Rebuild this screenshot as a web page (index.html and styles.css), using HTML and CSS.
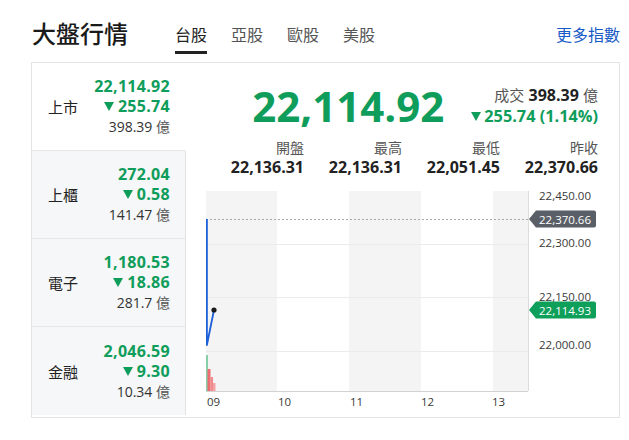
FILE: index.html
```html
<!DOCTYPE html>
<html lang="zh-Hant">
<head>
<meta charset="utf-8">
<title>大盤行情</title>
<link rel="stylesheet" href="styles.css">
</head>
<body>
<div class="page">
  <header class="header">
    <h1 class="title">大盤行情</h1>
    <nav class="tabs">
      <a class="tab active">台股</a>
      <a class="tab">亞股</a>
      <a class="tab">歐股</a>
      <a class="tab">美股</a>
    </nav>
    <a class="more">更多指數</a>
  </header>

  <section class="card">
    <aside class="side">
      <div class="row selected">
        <span class="name">上市</span>
        <div class="nums">
          <div class="price">22,114.92</div>
          <div class="chg"><i class="down"></i>255.74</div>
          <div class="vol">398.39 <span class="unit">億</span></div>
        </div>
      </div>
      <div class="row">
        <span class="name">上櫃</span>
        <div class="nums">
          <div class="price">272.04</div>
          <div class="chg"><i class="down"></i>0.58</div>
          <div class="vol">141.47 <span class="unit">億</span></div>
        </div>
      </div>
      <div class="row">
        <span class="name">電子</span>
        <div class="nums">
          <div class="price">1,180.53</div>
          <div class="chg"><i class="down"></i>18.86</div>
          <div class="vol">281.7 <span class="unit">億</span></div>
        </div>
      </div>
      <div class="row last">
        <span class="name">金融</span>
        <div class="nums">
          <div class="price">2,046.59</div>
          <div class="chg"><i class="down"></i>9.30</div>
          <div class="vol">10.34 <span class="unit">億</span></div>
        </div>
      </div>
    </aside>

    <div class="main">
      <div class="quote">
        <div class="big">22,114.92</div>
        <div class="quote-side">
          <div class="turnover"><span class="lbl">成交</span> <b>398.39</b> <span class="lbl">億</span></div>
          <div class="qchg"><i class="down"></i>255.74 (1.14%)</div>
        </div>
      </div>

      <div class="stats">
        <div class="stat"><div class="slbl">開盤</div><div class="sval">22,136.31</div></div>
        <div class="stat"><div class="slbl">最高</div><div class="sval">22,136.31</div></div>
        <div class="stat"><div class="slbl">最低</div><div class="sval">22,051.45</div></div>
        <div class="stat"><div class="slbl">昨收</div><div class="sval">22,370.66</div></div>
      </div>

      <svg class="chart" width="392" height="236" viewBox="0 0 392 236">
        <rect x="0" y="12" width="71" height="200" fill="#f4f4f4"/>
        <rect x="143" y="12" width="72" height="200" fill="#f4f4f4"/>
        <rect x="287" y="12" width="35" height="200" fill="#f4f4f4"/>
        <line x1="0" y1="65.5" x2="322" y2="65.5" stroke="#ebebeb"/>
        <line x1="0" y1="118.5" x2="322" y2="118.5" stroke="#ebebeb"/>
        <line x1="0" y1="172.5" x2="322" y2="172.5" stroke="#ebebeb"/>
        <line x1="0" y1="212.5" x2="322" y2="212.5" stroke="#d2d2d2"/>
        <line x1="322.5" y1="12" x2="322.5" y2="212" stroke="#dcdcdc"/>
        <line x1="0" y1="40.5" x2="324" y2="40.5" stroke="#a8a8a8" stroke-dasharray="2 2"/>
        <line x1="1" y1="176" x2="1" y2="212" stroke="#3db575" stroke-width="1.2"/>
        <rect x="1.5" y="190" width="3" height="22" fill="#ee6d70"/>
        <rect x="4.5" y="198" width="2.5" height="14" fill="#f08a8c"/>
        <rect x="7" y="204" width="2.5" height="8" fill="#f3a3a5"/>
        <path d="M0.9 40 L0.9 166 L8 131" fill="none" stroke="#1d5fd8" stroke-width="1.8" stroke-linejoin="round"/>
        <circle cx="8" cy="131" r="2.6" fill="#1b1b1b"/>
        <text class="ylbl" x="333" y="21">22,450.00</text>
        <text class="ylbl" x="333" y="68">22,300.00</text>
        <text class="ylbl" x="333" y="122">22,150.00</text>
        <text class="ylbl" x="333" y="170">22,000.00</text>
        <path d="M323 40 L330 31.5 L388 31.5 Q390 31.5 390 33.5 L390 46.5 Q390 48.5 388 48.5 L330 48.5 Z" fill="#5a5f67"/>
        <text class="tag" x="333" y="44.5">22,370.66</text>
        <path d="M323 131 L330 122.5 L388 122.5 Q390 122.5 390 124.5 L390 137.5 Q390 139.5 388 139.5 L330 139.5 Z" fill="#0e9f5b"/>
        <text class="tag" x="333" y="135.5">22,114.93</text>
        <text class="xlbl" x="1" y="227">09</text>
        <text class="xlbl" x="72" y="227">10</text>
        <text class="xlbl" x="144" y="227">11</text>
        <text class="xlbl" x="215" y="227">12</text>
        <text class="xlbl" x="286" y="227">13</text>
      </svg>
    </div>
  </section>
</div>
</body>
</html>
```

FILE: styles.css
```css
* { box-sizing: border-box; }
html, body { margin: 0; padding: 0; background: #fff; }
body {
  font-family: "Open Sans", "Noto Sans CJK TC", sans-serif;
  color: #222;
  width: 629px;
  height: 440px;
  overflow: hidden;
}
.page { width: 629px; }

.header {
  display: flex;
  align-items: flex-start;
  height: 62px;
  padding: 18px 9px 0 32px;
}
.title {
  margin: 0;
  font-family: "Noto Sans CJK TC", sans-serif;
  font-size: 24px;
  font-weight: 500;
  line-height: 30px;
  color: #1a1a1a;
}
.tabs {
  display: flex;
  gap: 24px;
  margin-left: 47px;
}
.tab, .more {
  font-family: "Noto Sans CJK TC", sans-serif;
  font-size: 16px;
  line-height: 22px;
  padding: 5px 0 6px;
  border-bottom: 3px solid transparent;
  color: #555;
  cursor: pointer;
}
.tab.active {
  color: #222;
  border-bottom-color: #222;
}
.more {
  margin-left: auto;
  color: #1a5cc6;
}

.card {
  margin-left: 31px;
  width: 589px;
  height: 356px;
  border: 1px solid #e3e3e3;
  display: flex;
}

.side {
  width: 154px;
  display: flex;
  flex-direction: column;
}
.row {
  height: 88px;
  display: flex;
  align-items: center;
  justify-content: space-between;
  padding: 0 15px 0 16px;
  background: #f6f7f8;
  border-right: 1px solid #e3e3e3;
  border-bottom: 1px solid #e6e6e6;
}
.row.selected {
  background: #fff;
  border-right-color: transparent;
}
.row.last { border-bottom: none; }
.name {
  font-family: "Noto Sans CJK TC", sans-serif;
  font-size: 15px;
  color: #222;
}
.nums { text-align: right; }
.price, .chg {
  font-size: 16px;
  font-weight: 700;
  line-height: 20px;
  letter-spacing: 0.3px;
  color: #0f9d5b;
}
.vol {
  font-size: 14px;
  line-height: 20px;
  color: #333;
}
.unit {
  font-family: "Noto Sans CJK TC", sans-serif;
  color: #555;
}
.down {
  display: inline-block;
  width: 0;
  height: 0;
  border-left: 5px solid transparent;
  border-right: 5px solid transparent;
  border-top: 9px solid #0f9d5b;
  margin-right: 4px;
  vertical-align: 1px;
}

.main {
  flex: 1;
  padding: 22px 21px 0 20px;
  display: flex;
  flex-direction: column;
}
.quote {
  display: flex;
  justify-content: flex-end;
  align-items: center;
  gap: 27px;
  height: 42px;
}
.big {
  font-size: 42px;
  font-weight: 700;
  line-height: 42px;
  color: #0f9d5b;
}
.quote-side { text-align: right; }
.turnover {
  font-size: 16px;
  line-height: 20px;
  height: 20px;
  color: #222;
}
.turnover b { font-weight: 700; }
.lbl {
  font-family: "Noto Sans CJK TC", sans-serif;
  font-size: 15px;
  line-height: 20px;
  color: #555;
}
.qchg {
  font-size: 16.3px;
  font-weight: 700;
  line-height: 21px;
  margin-top: 1px;
  color: #0f9d5b;
}
.qchg .down { margin-right: 3px; }

.stats {
  display: grid;
  grid-template-columns: repeat(4, 98px);
  margin-top: 10px;
}
.stat { text-align: right; }
.slbl {
  font-family: "Noto Sans CJK TC", sans-serif;
  font-size: 14px;
  line-height: 20px;
  color: #555;
}
.sval {
  font-size: 16px;
  font-weight: 700;
  line-height: 20px;
  color: #222;
}

.chart {
  display: block;
  margin-top: 2px;
  overflow: visible;
}
.ylbl, .xlbl {
  font-family: "Open Sans", sans-serif;
  font-size: 11.5px;
  fill: #3a3a3a;
}
.tag {
  font-family: "Open Sans", sans-serif;
  font-size: 11.5px;
  fill: #fff;
}
```
